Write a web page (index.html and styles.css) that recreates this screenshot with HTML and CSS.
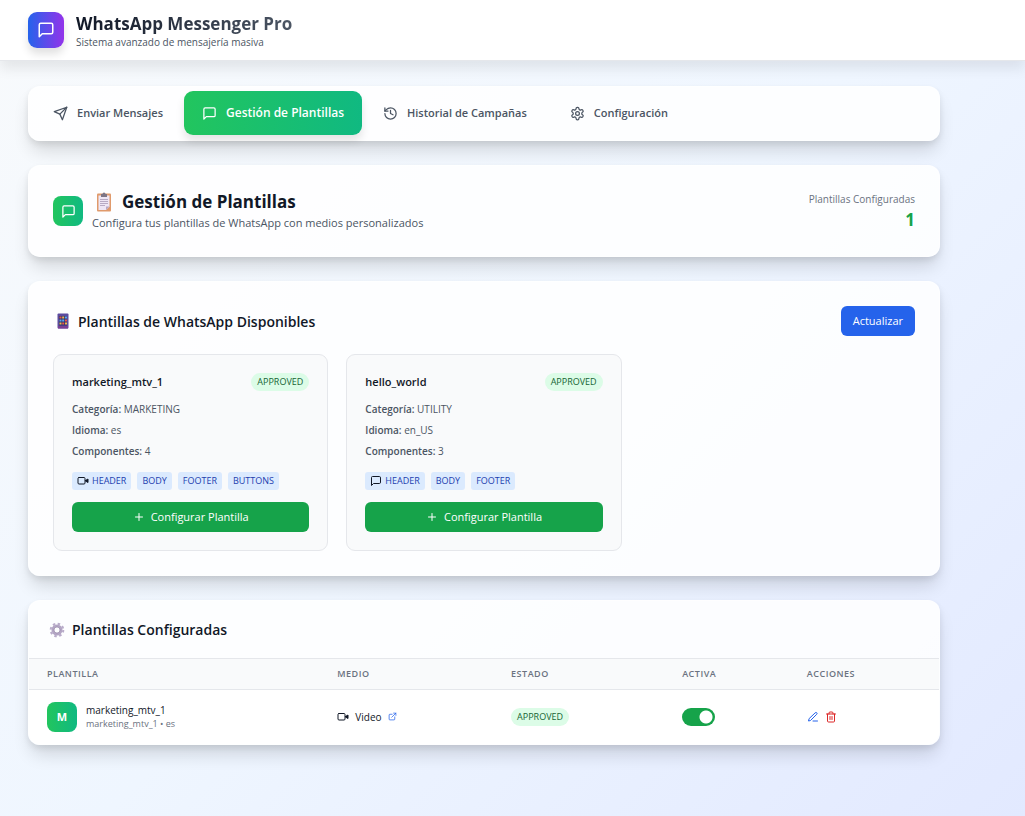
FILE: index.html
```html
<!DOCTYPE html>
<html lang="es">
<head>
<meta charset="utf-8">
<meta name="viewport" content="width=device-width, initial-scale=1">
<title>WhatsApp Messenger Pro</title>
<link rel="stylesheet" href="styles.css">
</head>
<body>
<svg class="sprite" aria-hidden="true">
  <symbol id="chat" viewBox="0 0 24 24"><path d="M21 15a2 2 0 0 1-2 2H7l-4 4V5a2 2 0 0 1 2-2h14a2 2 0 0 1 2 2z"/></symbol>
  <symbol id="send" viewBox="0 0 24 24"><path d="m22 2-7 20-4-9-9-4Z"/><path d="M22 2 11 13"/></symbol>
  <symbol id="history" viewBox="0 0 24 24"><path d="M3 12a9 9 0 1 0 9-9 9.75 9.75 0 0 0-6.74 2.74L3 8"/><path d="M3 3v5h5"/><path d="M12 7v5l4 2"/></symbol>
  <symbol id="gear" viewBox="0 0 24 24"><path d="M12.22 2h-.44a2 2 0 0 0-2 2v.18a2 2 0 0 1-1 1.73l-.43.25a2 2 0 0 1-2 0l-.15-.08a2 2 0 0 0-2.73.73l-.22.38a2 2 0 0 0 .73 2.73l.15.1a2 2 0 0 1 1 1.72v.51a2 2 0 0 1-1 1.74l-.15.09a2 2 0 0 0-.73 2.73l.22.38a2 2 0 0 0 2.73.73l.15-.08a2 2 0 0 1 2 0l.43.25a2 2 0 0 1 1 1.73V20a2 2 0 0 0 2 2h.44a2 2 0 0 0 2-2v-.18a2 2 0 0 1 1-1.73l.43-.25a2 2 0 0 1 2 0l.15.08a2 2 0 0 0 2.73-.73l.22-.39a2 2 0 0 0-.73-2.73l-.15-.08a2 2 0 0 1-1-1.74v-.5a2 2 0 0 1 1-1.74l.15-.09a2 2 0 0 0 .73-2.73l-.22-.38a2 2 0 0 0-2.73-.73l-.15.08a2 2 0 0 1-2 0l-.43-.25a2 2 0 0 1-1-1.73V4a2 2 0 0 0-2-2z"/><circle cx="12" cy="12" r="3"/></symbol>
  <symbol id="video" viewBox="0 0 24 24"><rect x="2" y="5" width="14" height="13" rx="2"/><path d="m17 11 5-3v7l-5-3z" fill="currentColor"/></symbol>
  <symbol id="plus" viewBox="0 0 24 24"><path d="M12 5v14M5 12h14"/></symbol>
  <symbol id="external" viewBox="0 0 24 24"><path d="M18 13v6a2 2 0 0 1-2 2H5a2 2 0 0 1-2-2V8a2 2 0 0 1 2-2h6M15 3h6v6M10 14 21 3"/></symbol>
  <symbol id="pen" viewBox="0 0 24 24"><path d="M12 20h9M16.5 3.5a2.12 2.12 0 0 1 3 3L7 19l-4 1 1-4Z"/></symbol>
  <symbol id="trash" viewBox="0 0 24 24"><path d="M3 6h18M19 6v14a2 2 0 0 1-2 2H7a2 2 0 0 1-2-2V6M8 6V4a2 2 0 0 1 2-2h4a2 2 0 0 1 2 2v2M10 11v6M14 11v6"/></symbol>
</svg>

<header class="topbar">
  <div class="topbar-inner">
    <div class="logo"><svg class="icon icon-lg"><use href="#chat"/></svg></div>
    <div>
      <h1 class="brand">WhatsApp Messenger Pro</h1>
      <p class="tagline">Sistema avanzado de mensajería masiva</p>
    </div>
  </div>
</header>

<main class="page">
  <nav class="card tabs">
    <button class="tab" type="button"><svg class="icon"><use href="#send"/></svg>Enviar Mensajes</button>
    <button class="tab tab-active" type="button"><svg class="icon"><use href="#chat"/></svg>Gestión de Plantillas</button>
    <button class="tab" type="button"><svg class="icon"><use href="#history"/></svg>Historial de Campañas</button>
    <button class="tab" type="button"><svg class="icon"><use href="#gear"/></svg>Configuración</button>
  </nav>

  <section class="card hero">
    <div class="hero-lead">
      <div class="square"><svg class="icon"><use href="#chat"/></svg></div>
      <div>
        <h2 class="hero-title">
          <svg class="clipboard" viewBox="0 0 18 20" aria-hidden="true"><rect x="2" y="1.500" width="14" height="18" rx="1" fill="#e09a6c"/><path d="M3.500 3.500h11v11l-3.500 3.500H3.500z" fill="#eee6f5"/><path d="M11 18v-3.500h3.500z" fill="#b8a9c9"/><path d="M6 2h1.500a1.500 1.500 0 0 1 3 0H12v3H6z" fill="#7d7586"/><path d="M5 7.500h8M5 9.500h8M5 11.500h8M5 13.500h5" stroke="#a89bb8" stroke-width=".8"/></svg>
          Gestión de Plantillas
        </h2>
        <p class="hero-text">Configura tus plantillas de WhatsApp con medios personalizados</p>
      </div>
    </div>
    <div class="stat">
      <p class="stat-label">Plantillas Configuradas</p>
      <p class="stat-value">1</p>
    </div>
  </section>

  <section class="card available">
    <div class="section-head">
      <h3 class="section-title">
        <svg class="phone" viewBox="0 0 20 16" aria-hidden="true"><rect x="4.500" y=".5" width="11" height="15" rx="1" fill="#5b4b9e"/><path d="M5 13h10v2.500H5z" fill="#7a3f94"/><path d="M6 3h8v9.500H6z" fill="#31366f"/><g fill="#e8554e"><path d="M6.500 3.500h2v2h-2zM12 6.500h2v2h-2zM9.200 9.500h2v2h-2z"/></g><g fill="#f2b84b"><path d="M9.200 3.500h2v2h-2zM6.500 9.500h2v2h-2zM12 9.500h2v2h-2z"/></g><g fill="#59a8ef"><path d="M12 3.500h2v2h-2zM6.500 6.500h2v2h-2zM9.200 6.500h2v2h-2z"/></g></svg>
        Plantillas de WhatsApp Disponibles
      </h3>
      <button class="btn btn-blue" type="button">Actualizar</button>
    </div>
    <div class="grid">
      <article class="template">
        <div class="template-head"><h4 class="template-name">marketing_mtv_1</h4><span class="badge">APPROVED</span></div>
        <div class="facts">
          <p><span class="key">Categoría:</span> MARKETING</p>
          <p><span class="key">Idioma:</span> es</p>
          <p><span class="key">Componentes:</span> 4</p>
        </div>
        <div class="tags">
          <span class="tag"><svg class="icon icon-sm dark"><use href="#video"/></svg>HEADER</span>
          <span class="tag">BODY</span><span class="tag">FOOTER</span><span class="tag">BUTTONS</span>
        </div>
        <button class="btn btn-green" type="button"><svg class="icon icon-sm"><use href="#plus"/></svg>Configurar Plantilla</button>
      </article>
      <article class="template">
        <div class="template-head"><h4 class="template-name">hello_world</h4><span class="badge">APPROVED</span></div>
        <div class="facts">
          <p><span class="key">Categoría:</span> UTILITY</p>
          <p><span class="key">Idioma:</span> en_US</p>
          <p><span class="key">Componentes:</span> 3</p>
        </div>
        <div class="tags">
          <span class="tag"><svg class="icon icon-sm dark"><use href="#chat"/></svg>HEADER</span>
          <span class="tag">BODY</span><span class="tag">FOOTER</span>
        </div>
        <button class="btn btn-green" type="button"><svg class="icon icon-sm"><use href="#plus"/></svg>Configurar Plantilla</button>
      </article>
    </div>
  </section>

  <section class="card configured">
    <h3 class="section-title table-title">
      <svg class="cog" viewBox="0 0 20 16" aria-hidden="true"><circle cx="10" cy="8" r="4.200" fill="none" stroke="#b3a6c4" stroke-width="2.600"/><circle cx="10" cy="8" r="6.300" fill="none" stroke="#b9acca" stroke-width="2" stroke-dasharray="2.470 2.470"/><circle cx="10" cy="8" r="3" fill="none" stroke="#8b7a9e" stroke-width=".6"/></svg>
      Plantillas Configuradas
    </h3>
    <table class="table">
      <thead>
        <tr><th class="c-template">Plantilla</th><th class="c-media">Medio</th><th class="c-state">Estado</th><th class="c-active">Activa</th><th>Acciones</th></tr>
      </thead>
      <tbody>
        <tr>
          <td><div class="cell"><span class="square avatar">M</span><div><p class="row-name">marketing_mtv_1</p><p class="row-sub">marketing_mtv_1 • es</p></div></div></td>
          <td><div class="media"><svg class="icon icon-sm dark"><use href="#video"/></svg><span>Video</span><a class="link" href="#video" aria-label="Abrir video"><svg class="icon icon-xs"><use href="#external"/></svg></a></div></td>
          <td><span class="badge">APPROVED</span></td>
          <td><input class="switch" type="checkbox" role="switch" aria-label="Activa" checked></td>
          <td><div class="actions"><button class="act edit" type="button" aria-label="Editar"><svg class="icon icon-sm"><use href="#pen"/></svg></button><button class="act remove" type="button" aria-label="Eliminar"><svg class="icon icon-sm"><use href="#trash"/></svg></button></div></td>
        </tr>
      </tbody>
    </table>
  </section>
</main>
</body>
</html>
```
FILE: styles.css
```css
* { box-sizing: border-box; }

body {
  margin: 0;
  min-height: 100vh;
  background: linear-gradient(135deg, #f8fafc, #eff6ff 50%, #e0e7ff 108%);
  color: #111827;
  font-family: "Segoe UI", "Open Sans", "Noto Sans", sans-serif;
  font-size: 11px;
  line-height: 18px;
}

h1, h2, h3, h4, p { margin: 0; }
button { font: inherit; border: 0; cursor: pointer; }
.sprite { display: none; }

.icon {
  width: 15px;
  height: 15px;
  flex: none;
  fill: none;
  stroke: currentColor;
  stroke-width: 2;
  stroke-linecap: round;
  stroke-linejoin: round;
}
.icon-lg { width: 18px; height: 18px; }
.icon-sm { width: 12px; height: 12px; }
.icon-xs { width: 9px; height: 9px; }
.dark { color: #111827; }

.topbar {
  background: #fff;
  border-bottom: 1px solid #e5e7eb;
  box-shadow: 0 8px 12px rgba(0, 0, 0, .08);
}
.topbar-inner {
  display: flex;
  align-items: center;
  gap: 12px;
  padding: 12px 28px;
}
.logo {
  display: grid;
  place-items: center;
  width: 36px;
  height: 36px;
  border-radius: 9px;
  background: linear-gradient(90deg, #2563eb, #9333ea);
  color: #fff;
  box-shadow: 0 6px 9px rgba(0, 0, 0, .12);
}
.brand {
  font-size: 17px;
  line-height: 24px;
  font-weight: 700;
  background: linear-gradient(90deg, #111827, #4b5563);
  background-clip: text;
  color: transparent;
}
.tagline { font-size: 10px; line-height: 12px; color: #4b5563; }

.page {
  display: flex;
  flex-direction: column;
  gap: 24px;
  max-width: 940px;
  padding: 25px 0 48px 28px;
}
.card {
  background: rgba(255, 255, 255, .85);
  border: 1px solid rgba(255, 255, 255, .5);
  border-radius: 12px;
  box-shadow: 0 12px 18px -3px rgba(0, 0, 0, .14), 0 3px 6px rgba(0, 0, 0, .08);
}

.tabs { display: flex; gap: 7px; padding: 5px 6px 6px; }
.tab {
  display: flex;
  align-items: center;
  gap: 9px;
  height: 42px;
  padding: 0 18px;
  border-radius: 9px;
  background: none;
  color: #4b5563;
  font-size: 11px;
  font-weight: 600;
}
.tab-active {
  height: 44px;
  margin: -1px -4px;
  background: linear-gradient(90deg, #22c55e, #10b981);
  color: #fff;
  font-size: 12px;
  box-shadow: 0 6px 9px rgba(0, 0, 0, .1);
}

.hero {
  display: flex;
  justify-content: space-between;
  align-items: center;
  padding: 24px;
}
.hero-lead { display: flex; align-items: center; gap: 9px; }
.square {
  display: grid;
  place-items: center;
  flex: none;
  width: 30px;
  height: 30px;
  border-radius: 8px;
  background: linear-gradient(90deg, #22c55e, #10b981);
  color: #fff;
}
.hero-title {
  display: flex;
  align-items: center;
  gap: 6px;
  font-size: 17px;
  line-height: 24px;
  font-weight: 700;
}
.clipboard { width: 24px; height: 20px; }
.hero-text { font-size: 11px; color: #4b5563; }
.stat { text-align: right; }
.stat-label { font-size: 10px; line-height: 18px; color: #6b7280; }
.stat-value { font-size: 17px; line-height: 24px; font-weight: 700; color: #16a34a; }

.available { padding: 24px; }
.section-head {
  display: flex;
  justify-content: space-between;
  align-items: center;
  margin-bottom: 18px;
}
.section-title {
  display: flex;
  align-items: center;
  gap: 5px;
  font-size: 14px;
  line-height: 21px;
  font-weight: 600;
}
.phone, .cog { width: 20px; height: 16px; }
.btn {
  display: flex;
  align-items: center;
  justify-content: center;
  gap: 6px;
  height: 30px;
  padding: 0 12px;
  border-radius: 6px;
  color: #fff;
  font-size: 11px;
  font-weight: 500;
}
.btn-blue { background: #2563eb; }
.btn-green { width: 100%; background: #16a34a; }

.grid { display: grid; grid-template-columns: repeat(3, 1fr); gap: 18px; }
.template {
  padding: 18px;
  background: #f9fafb;
  border: 1px solid #e5e7eb;
  border-radius: 9px;
}
.template-head {
  display: flex;
  justify-content: space-between;
  align-items: center;
  margin-bottom: 9px;
}
.template-name { font-size: 11px; line-height: 18px; font-weight: 600; }
.badge {
  display: inline-block;
  padding: 0 6px;
  border-radius: 9px;
  background: #dcfce7;
  color: #166534;
  font-size: 9px;
  line-height: 18px;
  font-weight: 500;
}
.facts {
  display: grid;
  gap: 3px;
  margin-bottom: 12px;
  font-size: 10px;
  color: #4b5563;
}
.key { font-weight: 600; }
.tags { display: flex; gap: 6px; margin-bottom: 12px; }
.tag {
  display: flex;
  align-items: center;
  gap: 3px;
  height: 18px;
  padding: 0 5px;
  border-radius: 3px;
  background: #dbeafe;
  color: #1e40af;
  font-size: 9px;
}

.configured { overflow: hidden; }
.table-title { padding: 18px; }
.table { width: 100%; border-collapse: collapse; table-layout: fixed; }
.table th {
  height: 31px;
  padding: 0 18px;
  border: solid #e5e7eb;
  border-width: 1px 0;
  background: #f9fafb;
  color: #6b7280;
  font-size: 9px;
  font-weight: 600;
  letter-spacing: .5px;
  text-align: left;
  text-transform: uppercase;
}
.c-template { width: 31.9%; }
.c-media { width: 19.1%; }
.c-state { width: 18.8%; }
.c-active { width: 13.7%; }
.table td { height: 54px; padding: 0 18px; background: #fff; }
.cell { display: flex; align-items: center; gap: 9px; }
.avatar { font-size: 11px; font-weight: 700; }
.row-name { font-size: 10px; line-height: 15px; font-weight: 500; }
.row-sub { font-size: 9px; line-height: 12px; color: #6b7280; }
.media { display: flex; align-items: center; gap: 6px; font-size: 10px; }
.link { display: flex; color: #2563eb; }
.switch {
  appearance: none;
  display: block;
  width: 33px;
  height: 18px;
  margin: 0;
  border-radius: 9px;
  background: radial-gradient(circle at 24px 9px, #fff 6px, #16a34a 7px);
}
.actions { display: flex; gap: 6px; }
.act { display: flex; padding: 0; background: none; }
.edit { color: #2563eb; }
.remove { color: #dc2626; }
```
